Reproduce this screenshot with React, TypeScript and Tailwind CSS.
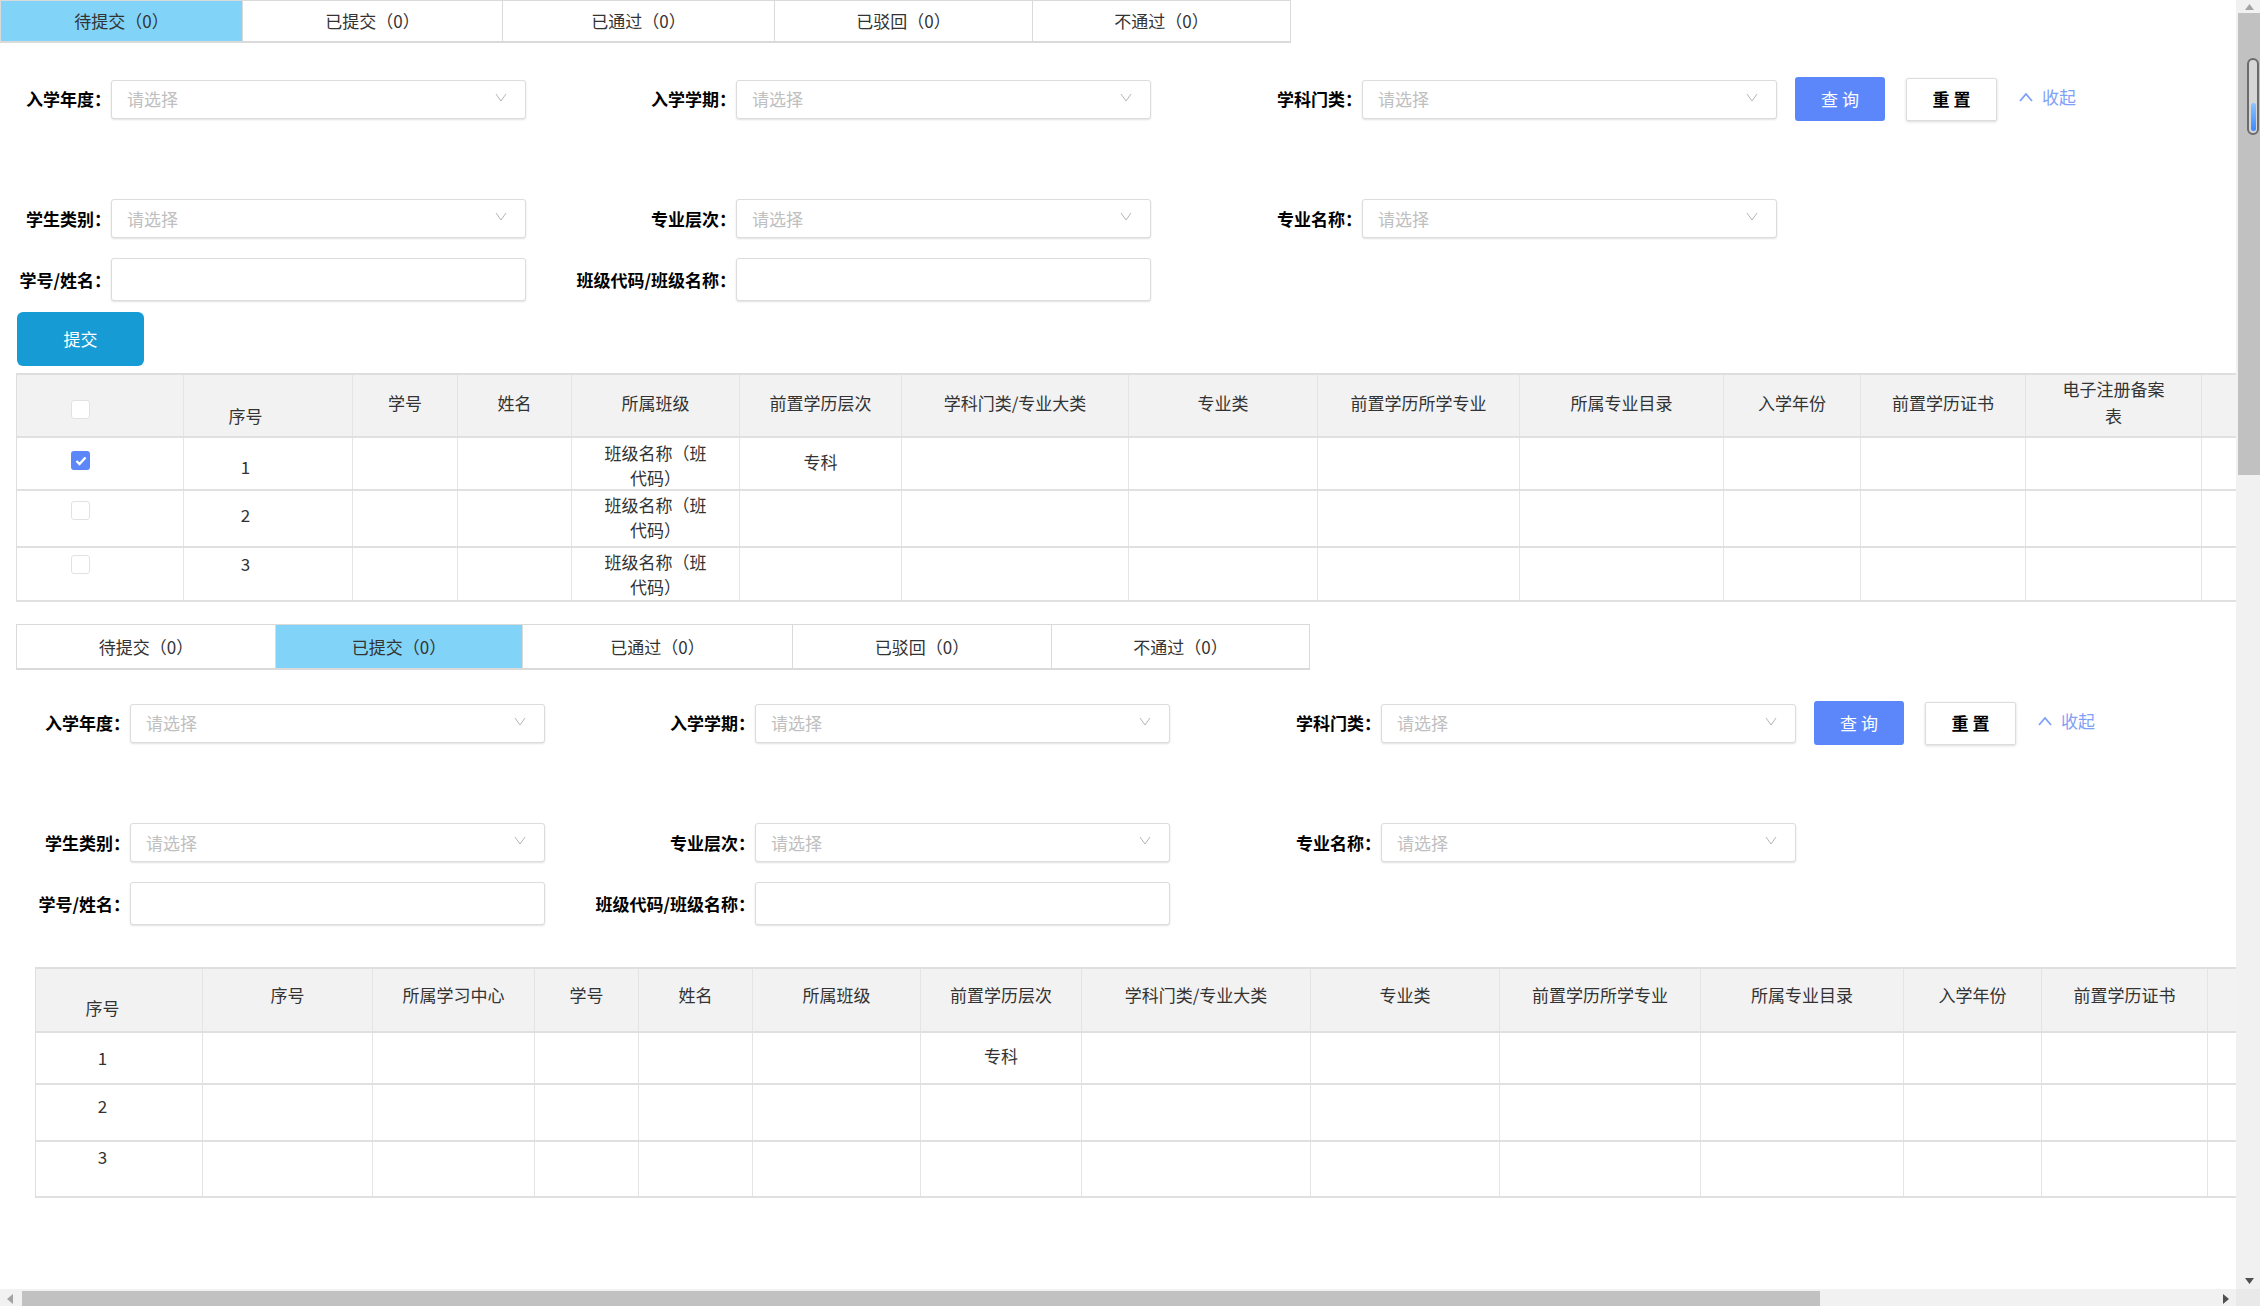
import React from "react";

const tabsTop = [
  { label: "待提交（0）", w: "w-[242px]" },
  { label: "已提交（0）", w: "w-[260px]" },
  { label: "已通过（0）", w: "w-[272px]" },
  { label: "已驳回（0）", w: "w-[258px]" },
  { label: "不通过（0）", w: "w-[258px]" },
];

const tabsBottom = [
  { label: "待提交（0）", w: "w-[259px]" },
  { label: "已提交（0）", w: "w-[247px]" },
  { label: "已通过（0）", w: "w-[270px]" },
  { label: "已驳回（0）", w: "w-[259px]" },
  { label: "不通过（0）", w: "w-[258px]" },
];

const cols1 = ["w-[167px]", "w-[169px]", "w-[105px]", "w-[114px]", "w-[168px]", "w-[162px]", "w-[227px]", "w-[189px]", "w-[202px]", "w-[204px]", "w-[137px]", "w-[165px]", "w-[176px]", "w-[180px]"];
const head1 = ["", "序号", "学号", "姓名", "所属班级", "前置学历层次", "学科门类/专业大类", "专业类", "前置学历所学专业", "所属专业目录", "入学年份", "前置学历证书", "电子注册备案表", ""];

const cols2 = ["w-[167px]", "w-[170px]", "w-[162px]", "w-[104px]", "w-[114px]", "w-[168px]", "w-[161px]", "w-[229px]", "w-[189px]", "w-[201px]", "w-[203px]", "w-[138px]", "w-[166px]", "w-[180px]"];
const head2 = ["序号", "序号", "所属学习中心", "学号", "姓名", "所属班级", "前置学历层次", "学科门类/专业大类", "专业类", "前置学历所学专业", "所属专业目录", "入学年份", "前置学历证书", ""];

function Tabs({ items, active, h }: { items: { label: string; w: string }[]; active: number; h: string }) {
  return (
    <div className={`flex w-max ${h} border-t border-l border-b-2 border-[#dadada]`}>
      {items.map((t, i) => (
        <div
          key={t.label}
          className={`${t.w} flex items-center justify-center border-r border-[#dadada] ${i === active ? "bg-[#81d3f8]" : "bg-white"}`}
        >
          {t.label}
        </div>
      ))}
    </div>
  );
}

function Label({ w, children }: { w: string; children: React.ReactNode }) {
  return <div className={`${w} shrink-0 text-right font-bold text-black whitespace-nowrap`}>{children}</div>;
}

function Select() {
  return (
    <div className="w-[415px] h-[39px] shrink-0 flex items-center justify-between pl-[15px] pr-[18px] bg-white border border-[#dcdcdc] rounded-[3px] shadow-[0_1px_2px_rgba(0,0,0,0.12)]">
      <span className="text-[#c0c0c0]">请选择</span>
      <svg width="12" height="9" viewBox="0 0 12 9" className="-mt-[4px]">
        <polyline points="1,1 6,8 11,1" fill="none" stroke="#b5b5b5" strokeWidth="1" />
      </svg>
    </div>
  );
}

function TextInput() {
  return <div className="w-[415px] h-[43px] shrink-0 bg-white border border-[#dcdcdc] rounded-[3px] shadow-[0_1px_2px_rgba(0,0,0,0.12)]" />;
}

function Filters({ first }: { first: string }) {
  return (
    <div>
      <div className="flex items-center h-[44px]">
        <Label w={first}>入学年度：</Label>
        <Select />
        <Label w="w-[210px]">入学学期：</Label>
        <Select />
        <Label w="w-[211px]">学科门类：</Label>
        <Select />
        <button className="ml-[18px] w-[90px] h-[44px] bg-[#5b87fa] text-white rounded-[3px] tracking-[4px] pl-[4px]">
          查询
        </button>
        <button className="ml-[21px] w-[91px] h-[43px] bg-white border border-[#dcdcdc] rounded-[2px] shadow-[0_1px_3px_rgba(0,0,0,0.15)] font-bold text-black tracking-[4px] pl-[4px]">
          重置
        </button>
        <div className="ml-[22px] flex items-center gap-[9px] text-[#7fa0f6] -mt-[4px]">
          <svg width="14" height="9" viewBox="0 0 14 9">
            <polyline points="1,8 7,1 13,8" fill="none" stroke="#7fa0f6" strokeWidth="1.8" />
          </svg>
          <span>收起</span>
        </div>
      </div>
      <div className="flex items-center h-[39px] mt-[78px]">
        <Label w={first}>学生类别：</Label>
        <Select />
        <Label w="w-[210px]">专业层次：</Label>
        <Select />
        <Label w="w-[211px]">专业名称：</Label>
        <Select />
      </div>
      <div className="flex items-center h-[43px] mt-[20px]">
        <Label w={first}>学号/姓名：</Label>
        <TextInput />
        <Label w="w-[210px]">班级代码/班级名称：</Label>
        <TextInput />
      </div>
    </div>
  );
}

function Checkbox({ checked }: { checked?: boolean }) {
  if (checked) {
    return (
      <div className="w-[19px] h-[19px] rounded-[3px] bg-[#5b87fa] flex items-center justify-center">
        <svg width="12" height="10" viewBox="0 0 12 10">
          <polyline points="1.5,5 4.5,8 10.5,1.5" fill="none" stroke="#fff" strokeWidth="2.4" />
        </svg>
      </div>
    );
  }
  return <div className="w-[19px] h-[19px] rounded-[3px] bg-white border border-[#e2e2e2]" />;
}

type CellSpec = { content?: React.ReactNode; pt?: string; left?: boolean; extra?: string };

function Row({ cols, cells, h, header }: { cols: string[]; cells: CellSpec[]; h: string; header?: boolean }) {
  return (
    <div className={`flex ${h} border-b-2 border-[#e0e0e0] ${header ? "bg-[#f2f2f2]" : "bg-white"}`}>
      {cols.map((w, i) => {
        const c = cells[i] || {};
        return (
          <div
            key={i}
            className={`${w} shrink-0 border-r border-[#e4e4e4] flex ${c.left ? "justify-start pl-[54px]" : "justify-center"} ${c.pt || ""} ${c.extra || ""}`}
          >
            {c.content}
          </div>
        );
      })}
    </div>
  );
}

const classText = <div className="w-[104px] text-center">班级名称（班代码）</div>;

function TableOne() {
  const headerCells: CellSpec[] = head1.map((t, i) => {
    if (i === 0) return { content: <Checkbox />, pt: "pt-[25px]", left: true };
    if (i === 1) return { content: t, pt: "pt-[28px]", extra: "pr-[45px]" };
    if (i === 12) return { content: <div className="w-[110px] text-center leading-[27px]">{t}</div>, pt: "pt-[0px]" };
    return { content: t, pt: "pt-[15px]" };
  });
  const rows: { h: string; cells: CellSpec[] }[] = [
    {
      h: "h-[53px]",
      cells: [
        { content: <Checkbox checked />, pt: "pt-[13px]", left: true },
        { content: "1", pt: "pt-[16px]", extra: "pr-[45px]" },
        {},
        {},
        { content: classText, pt: "pt-[2px]" },
        { content: "专科", pt: "pt-[11px]" },
      ],
    },
    {
      h: "h-[57px]",
      cells: [
        { content: <Checkbox />, pt: "pt-[10px]", left: true },
        { content: "2", pt: "pt-[11px]", extra: "pr-[45px]" },
        {},
        {},
        { content: classText, pt: "pt-[1px]" },
      ],
    },
    {
      h: "h-[54px]",
      cells: [
        { content: <Checkbox />, pt: "pt-[7px]", left: true },
        { content: "3", pt: "pt-[3px]", extra: "pr-[45px]" },
        {},
        {},
        { content: classText, pt: "pt-[1px]" },
      ],
    },
  ];
  return (
    <div className="ml-[16px] mt-[7px] w-[2365px] border-l border-t-2 border-[#dedede] leading-[25px]">
      <Row cols={cols1} cells={headerCells} h="h-[63px]" header />
      {rows.map((r, i) => (
        <Row key={i} cols={cols1} cells={r.cells} h={r.h} />
      ))}
    </div>
  );
}

function TableTwo() {
  const headerCells: CellSpec[] = head2.map((t, i) =>
    i === 0 ? { content: t, pt: "pt-[26px]", extra: "pr-[33px]" } : { content: t, pt: "pt-[13px]" }
  );
  const rows: { h: string; cells: CellSpec[] }[] = [
    {
      h: "h-[52px]",
      cells: [{ content: "1", pt: "pt-[12px]", extra: "pr-[33px]" }, {}, {}, {}, {}, {}, { content: "专科", pt: "pt-[10px]" }],
    },
    { h: "h-[57px]", cells: [{ content: "2", pt: "pt-[8px]", extra: "pr-[33px]" }] },
    { h: "h-[56px]", cells: [{ content: "3", pt: "pt-[2px]", extra: "pr-[33px]" }] },
  ];
  return (
    <div className="ml-[35px] mt-[42px] w-[2352px] border-l border-t-2 border-[#dedede] leading-[25px]">
      <Row cols={cols2} cells={headerCells} h="h-[64px]" header />
      {rows.map((r, i) => (
        <Row key={i} cols={cols2} cells={r.cells} h={r.h} />
      ))}
    </div>
  );
}

function VScroll() {
  return (
    <div className="w-[24px] h-full flex flex-col bg-[#f1f1f1]">
      <div className="h-[13px] flex items-center justify-center pl-[2px]">
        <svg width="9" height="6" viewBox="0 0 9 6">
          <polygon points="0,6 4.5,0 9,6" fill="#a3a3a3" />
        </svg>
      </div>
      <div className="ml-[2px] h-[462px] bg-[#c1c1c1] pt-[45px] pl-[9px]">
        <div className="w-[12px] h-[77px] rounded-full border-2 border-[#6b6b6b] bg-[#d6d6d6] flex flex-col justify-end items-center pb-[2px]">
          <div className="w-[5px] h-[28px] rounded-full bg-gradient-to-b from-[#8cc2ff] to-[#3b87ff]" />
        </div>
      </div>
      <div className="flex-1" />
      <div className="h-[17px] flex items-center justify-center pl-[2px]">
        <svg width="9" height="6" viewBox="0 0 9 6">
          <polygon points="0,0 9,0 4.5,6" fill="#505050" />
        </svg>
      </div>
      <div className="h-[17px] bg-[#e9e9e9]" />
    </div>
  );
}

function HScroll() {
  return (
    <div className="h-[17px] flex bg-[#f1f1f1]">
      <div className="w-[20px] flex items-center justify-center pt-[3px]">
        <svg width="6" height="10" viewBox="0 0 6 10">
          <polygon points="6,0 6,10 0,5" fill="#a3a3a3" />
        </svg>
      </div>
      <div className="ml-[2px] mt-[2px] w-[1798px] h-[15px] bg-[#c1c1c1]" />
      <div className="flex-1" />
      <div className="w-[20px] flex items-center justify-center pt-[3px]">
        <svg width="6" height="10" viewBox="0 0 6 10">
          <polygon points="0,0 0,10 6,5" fill="#505050" />
        </svg>
      </div>
    </div>
  );
}

export default function App() {
  return (
    <div className="w-[2260px] h-[1306px] flex bg-white overflow-hidden font-['Noto_Sans_CJK_SC',sans-serif] text-[17px] text-[#333]">
      <div className="w-[2236px] flex flex-col">
        <div className="h-[1289px] overflow-hidden">
          {/* 待提交 section */}
          <Tabs items={tabsTop} active={0} h="h-[43px]" />
          <div className="mt-[34px]">
            <Filters first="w-[111px]" />
          </div>
          <button className="ml-[17px] mt-[11px] w-[127px] h-[54px] bg-[#169bd5] text-white rounded-[6px] block">
            提交
          </button>
          <TableOne />

          {/* 已提交 section */}
          <div className="ml-[16px] mt-[22px]">
            <Tabs items={tabsBottom} active={1} h="h-[46px]" />
          </div>
          <div className="mt-[31px]">
            <Filters first="w-[130px]" />
          </div>
          <TableTwo />
        </div>
        <HScroll />
      </div>
      <VScroll />
    </div>
  );
}
